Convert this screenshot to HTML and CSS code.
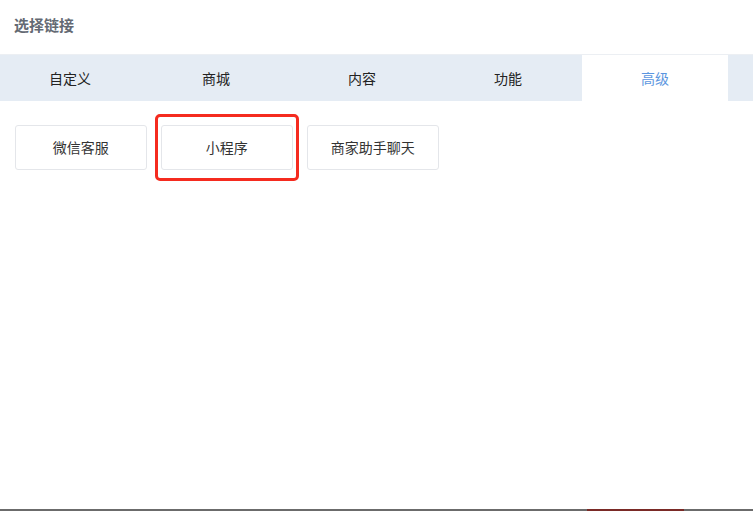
FILE: index.html
```html
<!DOCTYPE html>
<html lang="zh-CN">
<head>
  <meta charset="UTF-8">
  <meta name="viewport" content="width=device-width, initial-scale=1.0">
  <title>选择链接</title>
  <link rel="stylesheet" href="styles.css">
</head>
<body>
  <div class="dialog">
    <!-- Header -->
    <div class="dialog-header">选择链接</div>

    <!-- Tabs -->
    <div class="tabs">
      <div class="tab">自定义</div>
      <div class="tab">商城</div>
      <div class="tab">内容</div>
      <div class="tab">功能</div>
      <div class="tab active">高级</div>
    </div>

    <!-- Links -->
    <div class="links">
      <div class="link">微信客服</div>
      <div class="link marked">小程序</div>
      <div class="link">商家助手聊天</div>
    </div>
  </div>
  <div class="bottom-bar">
    <span class="seg-red"></span>
  </div>
</body>
</html>
```

FILE: styles.css
```css
body {
  margin: 0;
  font-family: "Noto Sans CJK SC", "Microsoft YaHei", sans-serif;
  background: #fff;
  width: 753px;
  height: 511px;
  overflow: hidden;
  display: flex;
  flex-direction: column;
}

.dialog {
  flex: 1;
}

/* Header */
.dialog-header {
  height: 54px;
  line-height: 50px;
  padding-left: 14px;
  font-size: 15px;
  font-weight: bold;
  color: #646a73;
  border-bottom: 1px solid #eceff3;
}

/* Tabs */
.tabs {
  display: flex;
  height: 46px;
  background: #e5ecf4;
}

.tab {
  width: 144px;
  padding-right: 2px;
  line-height: 46px;
  text-align: center;
  font-size: 14px;
  color: #222;
}

.tab:first-child {
  width: 140px;
  padding-right: 4px;
}

.tab.active {
  width: 146px;
  padding-right: 0;
  background: #fff;
  color: #5b96e0;
}

/* Link buttons */
.links {
  display: flex;
  gap: 14.5px;
  padding: 24px 15px;
}

.link {
  position: relative;
  width: 129.5px;
  height: 43px;
  line-height: 42px;
  text-align: center;
  font-size: 14px;
  color: #333;
  border: 1px solid #e4e6ea;
  border-radius: 3px;
}

.link.marked::after {
  content: "";
  position: absolute;
  left: -7px;
  top: -12px;
  width: 138px;
  height: 61px;
  border: 3px solid #f52b1f;
  border-radius: 5px;
}

/* Bottom strip */
.bottom-bar {
  height: 2px;
  background: #6b6b6b;
  position: relative;
}

.seg-red {
  position: absolute;
  left: 587px;
  width: 97px;
  height: 2px;
  background: #7a2a26;
}
```
